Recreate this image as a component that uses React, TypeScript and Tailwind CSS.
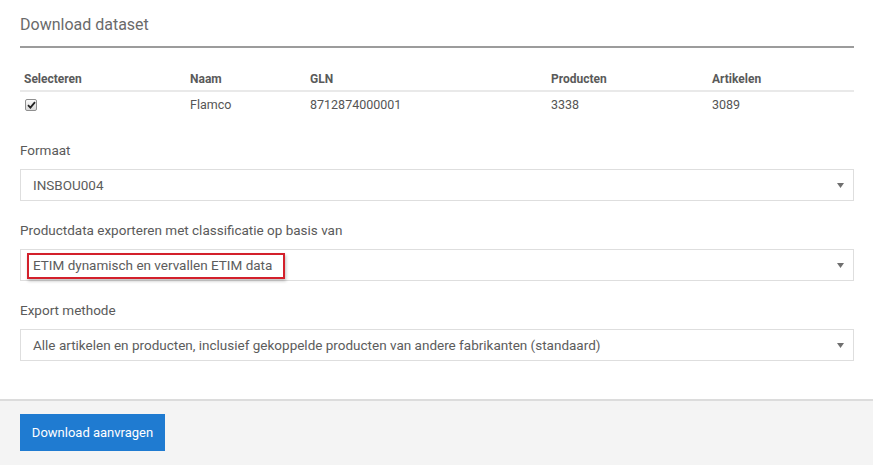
const columns = [
  { label: 'Selecteren', width: 'w-[166px]' },
  { label: 'Naam', width: 'w-[120px]' },
  { label: 'GLN', width: 'w-[241px]' },
  { label: 'Producten', width: 'w-[161px]' },
  { label: 'Artikelen', width: 'flex-1' },
];

function Checkbox() {
  return (
    <span className="flex h-[12px] w-[12px] items-center justify-center rounded-[2px] border border-[#8f8f8f] bg-gradient-to-b from-[#fafafa] to-[#d9d9d9]">
      <svg width="9" height="8" viewBox="0 0 9 8">
        <path d="M1 4.2 L3.4 6.6 L8 1.2" fill="none" stroke="#222" strokeWidth="1.8" />
      </svg>
    </span>
  );
}

function SelectBox({ value, highlight = false }: { value: string; highlight?: boolean }) {
  return (
    <div className="relative flex h-[32px] items-center justify-between border border-[#dedede] bg-white pl-[12px] pr-[8px]">
      <span className="text-[13.5px] text-[#5c5c5c]">{value}</span>
      <svg width="7" height="5" viewBox="0 0 7 5" className="mr-[1px]">
        <path d="M0 0 H7 L3.5 5 Z" fill="#6f6f6f" />
      </svg>
      {highlight && (
        <div className="absolute left-[6px] top-[3px] h-[26px] w-[258px] border-2 border-[#d3202b] shadow-[1px_2px_3px_rgba(0,0,0,0.25)]" />
      )}
    </div>
  );
}

function Field({ label, value, highlight }: { label: string; value: string; highlight?: boolean }) {
  return (
    <div className="flex flex-col">
      <label className="text-[13.5px] leading-[20px] text-[#5a5a5a]">{label}</label>
      <div className="mt-[9px]">
        <SelectBox value={value} highlight={highlight} />
      </div>
    </div>
  );
}

export default function App() {
  return (
    <div
      className="h-[468px] w-[875px] bg-white"
      style={{ fontFamily: 'Roboto, "Liberation Sans", sans-serif' }}
    >
      <div className="pl-[20px] pr-[21px] pt-[15px]">
        <h2 className="text-[16px] leading-[20px] text-[#6a6a6a]">Download dataset</h2>
        <div className="mt-[11px] h-[2px] bg-[#9c9c9c]" />

        <div className="mt-[20px] flex h-[24px] items-center border-b-2 border-[#e9e9e9]">
          {columns.map((c) => (
            <div key={c.label} className={`${c.width} pl-[4px] text-[12px] font-bold text-[#5a5a5a]`}>
              {c.label}
            </div>
          ))}
        </div>
        <div className="flex h-[26px] items-center text-[12.5px] text-[#555]">
          <div className="w-[166px] pl-[5px]">
            <Checkbox />
          </div>
          <div className="w-[120px] pl-[4px]">Flamco</div>
          <div className="w-[241px] pl-[4px]">8712874000001</div>
          <div className="w-[161px] pl-[4px]">3338</div>
          <div className="flex-1 pl-[4px]">3089</div>
        </div>

        <div className="mt-[22px] flex flex-col gap-[19px]">
          <Field label="Formaat" value="INSBOU004" />
          <Field
            label="Productdata exporteren met classificatie op basis van"
            value="ETIM dynamisch en vervallen ETIM data"
            highlight
          />
          <Field
            label="Export methode"
            value="Alle artikelen en producten, inclusief gekoppelde producten van andere fabrikanten (standaard)"
          />
        </div>
      </div>

      <div className="mt-[38px] w-[873px] border-t-2 border-[#dcdcdc] bg-[#f4f4f4] pb-[14px] pl-[20px] pt-[13px]">
        <button className="h-[37px] w-[145px] bg-[#1f7bd1] text-[13px] text-white">
          Download aanvragen
        </button>
      </div>
    </div>
  );
}
